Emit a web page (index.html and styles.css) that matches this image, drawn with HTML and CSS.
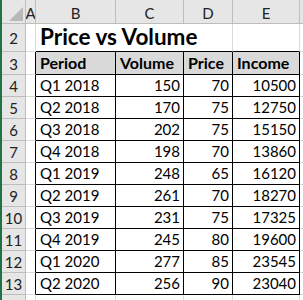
FILE: index.html
```html
<!DOCTYPE html>
<html>
<head>
<meta charset="utf-8">
<link rel="stylesheet" href="styles.css">
</head>
<body>
<div class="sheet">
  <div class="corner"><span class="tri"></span></div>
  <div class="ch">A</div>
  <div class="ch">B</div>
  <div class="ch">C</div>
  <div class="ch">D</div>
  <div class="ch">E</div>
  <div class="ch end"></div>

  <div class="rh">2</div>
  <div class="c"></div>
  <div class="c title span3">Price vs Volume</div>
  <div class="c tb"></div>
  <div class="c end"></div>

  <div class="rh">3</div>
  <div class="c tl"></div>
  <div class="c t th">Period</div>
  <div class="c t th">Volume</div>
  <div class="c t th">Price</div>
  <div class="c t th">Income</div>
  <div class="c end"></div>

  <div class="rh">4</div><div class="c tl"></div><div class="c t">Q1 2018</div><div class="c t n">150</div><div class="c t n">70</div><div class="c t n">10500</div><div class="c end"></div>
  <div class="rh">5</div><div class="c tl"></div><div class="c t">Q2 2018</div><div class="c t n">170</div><div class="c t n">75</div><div class="c t n">12750</div><div class="c end"></div>
  <div class="rh">6</div><div class="c tl"></div><div class="c t">Q3 2018</div><div class="c t n">202</div><div class="c t n">75</div><div class="c t n">15150</div><div class="c end"></div>
  <div class="rh">7</div><div class="c tl"></div><div class="c t">Q4 2018</div><div class="c t n">198</div><div class="c t n">70</div><div class="c t n">13860</div><div class="c end"></div>
  <div class="rh">8</div><div class="c tl"></div><div class="c t">Q1 2019</div><div class="c t n">248</div><div class="c t n">65</div><div class="c t n">16120</div><div class="c end"></div>
  <div class="rh">9</div><div class="c tl"></div><div class="c t">Q2 2019</div><div class="c t n">261</div><div class="c t n">70</div><div class="c t n">18270</div><div class="c end"></div>
  <div class="rh">10</div><div class="c tl"></div><div class="c t">Q3 2019</div><div class="c t n">231</div><div class="c t n">75</div><div class="c t n">17325</div><div class="c end"></div>
  <div class="rh">11</div><div class="c tl"></div><div class="c t">Q4 2019</div><div class="c t n">245</div><div class="c t n">80</div><div class="c t n">19600</div><div class="c end"></div>
  <div class="rh">12</div><div class="c tl"></div><div class="c t">Q1 2020</div><div class="c t n">277</div><div class="c t n">85</div><div class="c t n">23545</div><div class="c end"></div>
  <div class="rh">13</div><div class="c tl"></div><div class="c t">Q2 2020</div><div class="c t n">256</div><div class="c t n">90</div><div class="c t n">23040</div><div class="c end"></div>

  <div class="rh"></div><div class="c"></div><div class="c"></div><div class="c"></div><div class="c"></div><div class="c"></div><div class="c end"></div>
</div>
</body>
</html>
```

FILE: styles.css
```css
html, body {
  margin: 0;
  padding: 0;
  background: #ffffff;
}

.sheet {
  display: grid;
  grid-template-columns: 24px 10px 80px 68px 49px 67px 3px;
  grid-template-rows: 24px 28px 23px repeat(10, 22px) 10px;
  width: 303px;
  height: 300px;
  overflow: hidden;
  font-family: Lato, "Open Sans", sans-serif;
  color: #000;
  border-left: 2px solid #217346;
  box-sizing: border-box;
}

.sheet > div {
  box-sizing: border-box;
  white-space: nowrap;
  overflow: hidden;
}

.corner {
  background: #e6e6e6;
  border-right: 1px solid #bdbdbd;
  border-bottom: 1px solid #bdbdbd;
  position: relative;
}

.tri {
  position: absolute;
  right: 2px;
  bottom: 2px;
  width: 0;
  height: 0;
  border-left: 14px solid transparent;
  border-bottom: 14px solid #b8b8b8;
}

.ch {
  background: #e6e6e6;
  border-right: 1px solid #bdbdbd;
  border-bottom: 1px solid #bdbdbd;
  color: #222;
  font-size: 15px;
  display: flex;
  align-items: center;
  justify-content: center;
  padding-top: 2px;
}

.ch.end {
  border-right: none;
}

.rh {
  background: #e6e6e6;
  border-right: 1px solid #bdbdbd;
  border-bottom: 1px solid #bdbdbd;
  color: #222;
  font-size: 15px;
  display: flex;
  align-items: center;
  justify-content: center;
  padding-top: 1px;
}

.c {
  border-right: 1px solid #dadada;
  border-bottom: 1px solid #dadada;
  font-size: 15px;
  display: flex;
  align-items: flex-end;
  padding: 0 3px 2px 4px;
  line-height: 18px;
}

.c.end {
  border-right: none;
}

.title {
  grid-column: span 3;
  font-size: 22.5px;
  font-weight: 700;
  line-height: 26px;
  border-bottom: 1px solid #000;
  padding-bottom: 1px;
}

.tb {
  border-bottom: 1px solid #000;
}

.tl {
  border-right: 1px solid #000;
}

.t {
  border-right: 1px solid #000;
  border-bottom: 1px solid #000;
}

.th {
  background: #d9d9d9;
  font-weight: 700;
  font-size: 16px;
}

.n {
  justify-content: flex-end;
}
```
